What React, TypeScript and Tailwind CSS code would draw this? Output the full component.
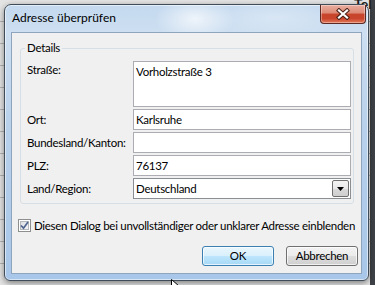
import React from "react";

function CloseButton() {
  return (
    <div className="w-[46px] h-[19px] rounded-b-[4px] border border-t-0 border-[#5c2a22] bg-[linear-gradient(to_bottom,#e9ad9f_0%,#dd8a76_45%,#c7452c_50%,#c9462d_75%,#e2795a_100%)] shadow-[inset_0_0_0_1px_rgba(255,255,255,0.35)] flex items-center justify-center">
      <svg width="14" height="12" viewBox="0 0 14 12">
        <path d="M3 2.5 L11 9.5 M11 2.5 L3 9.5" stroke="#4a2018" strokeWidth="4.2" strokeLinecap="square" fill="none" />
        <path d="M3 2.5 L11 9.5 M11 2.5 L3 9.5" stroke="#ffffff" strokeWidth="2.2" strokeLinecap="square" fill="none" />
      </svg>
    </div>
  );
}

function Field({ text }: { text?: string }) {
  return (
    <div className="h-[21px] border border-[#abadb3] bg-white pl-[2px] flex items-center">
      {text}
    </div>
  );
}

export default function App() {
  return (
    <div className="relative w-[375px] h-[285px] overflow-hidden pl-[4px] pt-[4px] bg-[linear-gradient(to_right,transparent_0px,transparent_370px,#3e4246_370px),repeating-linear-gradient(to_bottom,#e4e4e4_0px,#e4e4e4_21px,#b4b4b4_21px,#b4b4b4_22px)] font-[family-name:'Segoe_UI',Lato,sans-serif]">
      <span className="absolute left-[354px] top-[-7px] text-[14px] font-bold text-[#222]">Tel</span>
      <div className="relative w-[365px] h-[277px] flex flex-col rounded-t-[7px] rounded-b-[6px] border border-[#404c58] bg-[radial-gradient(ellipse_40px_22px_at_190px_14px,rgba(255,255,255,0.7),transparent),radial-gradient(ellipse_70px_20px_at_270px_12px,rgba(255,255,255,0.3),transparent),linear-gradient(to_bottom,#c4d9ef_0px,#cddff1_28px,#b9d1eb_120px,#a7c6e9_277px)] shadow-[inset_0_0_0_1px_rgba(255,255,255,0.55),0_2px_6px_rgba(0,0,0,0.45)]">
        <div className="h-[27px] flex items-start justify-between pl-[7px] pr-[2px]">
          <span className="mt-[5px] text-[12px] leading-[16px] text-black">Adresse überprüfen</span>
          <CloseButton />
        </div>
        <div className="mx-[6px] h-[242px] border border-[#8fa5bd] bg-[#f0f0f0] flex flex-col text-[11.5px] leading-[16px] tracking-[-0.28px] text-black">
          <div className="relative ml-[8px] mr-[7px] mt-[15px] border border-[#d5dfe5] rounded-[3px] pl-[6px] pr-[2px] pt-[12px] pb-[4px]">
            <span className="absolute left-[4px] top-[-9px] bg-[#f0f0f0] px-[2px]">Details</span>
            <div className="grid grid-cols-[106px_1fr] gap-y-[2px]">
              <div className="pt-[1px]">Straße:</div>
              <div className="h-[46px] border border-[#abadb3] bg-white pl-[2px] pt-[2px]">Vorholzstraße 3</div>
              <div className="self-center whitespace-nowrap">Ort:</div>
              <Field text="Karlsruhe" />
              <div className="self-center whitespace-nowrap">Bundesland/Kanton:</div>
              <Field />
              <div className="self-center whitespace-nowrap">PLZ:</div>
              <Field text="76137" />
              <div className="self-center whitespace-nowrap">Land/Region:</div>
              <div className="h-[21px] border border-[#8a8f96] bg-white pl-[2px] flex items-center justify-between">
                <span>Deutschland</span>
                <div className="w-[17px] h-[17px] mr-[1px] border border-[#6f6f6f] rounded-[2px] bg-[linear-gradient(to_bottom,#f4f4f4_0%,#e9e9e9_50%,#d9d9d9_51%,#cfcfcf_100%)] flex items-center justify-center">
                  <svg width="7" height="4" viewBox="0 0 7 4">
                    <path d="M0 0 L7 0 L3.5 4 Z" fill="#000" />
                  </svg>
                </div>
              </div>
            </div>
          </div>
          <div className="ml-[6px] mt-[15px] h-[13px] flex items-center">
            <div className="w-[13px] h-[13px] border border-[#8e8f8f] bg-white p-[1px] shrink-0">
              <div className="w-full h-full border border-[#b5b8bc] bg-[linear-gradient(135deg,#dcdfe3_0%,#f4f4f5_100%)] relative">
                <svg className="absolute left-[-1px] top-[-1px]" width="9" height="9" viewBox="0 0 9 9">
                  <path d="M1 4.5 L3.5 7.2 L8 1" stroke="#4f6590" strokeWidth="1.7" fill="none" />
                </svg>
              </div>
            </div>
            <span className="ml-[3px] whitespace-nowrap">Diesen Dialog bei unvollständiger oder unklarer Adresse einblenden</span>
          </div>
          <div className="mt-[14px] mr-[3px] flex justify-end gap-[12px]">
            <div className="w-[72px] h-[20px] rounded-[3px] border border-[#3c7fb1] bg-[linear-gradient(to_bottom,#eaf6fd_0%,#d9f0fc_50%,#bee6fd_51%,#a7d9f5_100%)] shadow-[inset_0_0_0_1px_rgba(255,255,255,0.7)] flex items-center justify-center">
              OK
            </div>
            <div className="w-[72px] h-[20px] rounded-[3px] border border-[#707070] bg-[linear-gradient(to_bottom,#f2f2f2_0%,#ebebeb_50%,#dddddd_51%,#cfcfcf_100%)] shadow-[inset_0_0_0_1px_rgba(255,255,255,0.7)] flex items-center justify-center">
              Abbrechen
            </div>
          </div>
        </div>
      </div>
      <svg className="absolute left-[171px] top-[279px]" width="10" height="12" viewBox="0 0 10 12">
        <path d="M0.5 0.5 L0.5 10 L3 7.5 L5 11.5 L6.5 10.8 L4.6 7 L8 7 Z" fill="#fff" stroke="#000" strokeWidth="1" />
      </svg>
    </div>
  );
}
